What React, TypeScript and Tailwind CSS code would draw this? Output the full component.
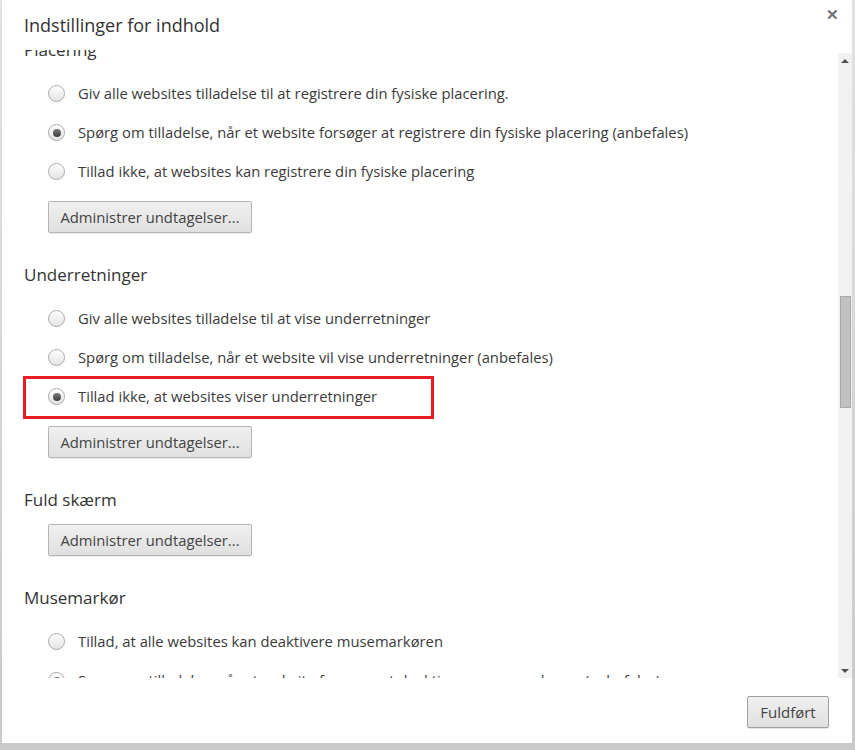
import React from 'react';

type Option = { label: string; checked?: boolean; marked?: boolean };

const Radio: React.FC<{ checked?: boolean }> = ({ checked }) => (
  <span className="relative flex h-[17px] w-[17px] shrink-0 items-center justify-center rounded-full border border-[#a9a9a9] bg-gradient-to-b from-[#fdfdfd] to-[#e4e4e4] shadow-[inset_0_1px_0_#fff]">
    {checked && (
      <span className="h-[8px] w-[8px] rounded-full bg-gradient-to-b from-[#7a7a7a] to-[#3c3c3c]" />
    )}
  </span>
);

const OptionRow: React.FC<Option> = ({ label, checked, marked }) => (
  <div className="relative flex h-[39px] items-center gap-[13px]">
    <Radio checked={checked} />
    <span>{label}</span>
    {marked && (
      <div className="pointer-events-none absolute -left-[25px] top-[-1px] h-[43px] w-[411px] border-[3px] border-[#e81d25]" />
    )}
  </div>
);

const ExceptionsButton = () => (
  <button className="h-[32px] w-[204px] rounded-[2px] border border-[#b4b4b4] bg-gradient-to-b from-[#f0f0f0] to-[#e0e0e0] text-[#444] shadow-[0_1px_0_rgba(0,0,0,0.08)]">
    Administrer undtagelser...
  </button>
);

const Section: React.FC<{ title: string; options?: Option[]; button?: boolean; last?: boolean }> = ({
  title,
  options,
  button = true,
  last,
}) => (
  <section className={last ? '' : 'mb-[30px]'}>
    <h3 className="h-[24px] text-[17px] leading-[24px] text-[#333]">{title}</h3>
    <div className="mt-[12px] pl-[24px]">
      {options && (
        <div className={button ? 'mb-[10px]' : ''}>
          {options.map((o) => (
            <OptionRow key={o.label} {...o} />
          ))}
        </div>
      )}
      {button && <ExceptionsButton />}
    </div>
  </section>
);

export default function App() {
  return (
    <div
      className="h-[750px] w-[855px] bg-gradient-to-b from-[#e2e2e2] to-[#c9c9c9] pl-[2px] pr-[3px] text-[14.8px] text-[#3a3a3a]"
      style={{ fontFamily: '"Open Sans", "Noto Sans", sans-serif' }}
    >
      <div className="flex h-[743px] flex-col bg-white">
        {/* title bar */}
        <div className="relative flex h-[50px] shrink-0 items-start pl-[22px] pt-[11px]">
          <h2 className="text-[18px] leading-[28px] text-[#333]">Indstillinger for indhold</h2>
          <span className="absolute right-[13px] top-[3px] text-[15px] font-bold text-[#6f6f6f]">✕</span>
        </div>

        {/* scrolling content */}
        <div className="flex h-[628px] shrink-0">
          <div className="flex-1 overflow-hidden">
            <div className="-mt-[12px] pl-[22px]">
              <Section
                title="Placering"
                options={[
                  { label: 'Giv alle websites tilladelse til at registrere din fysiske placering.' },
                  {
                    label: 'Spørg om tilladelse, når et website forsøger at registrere din fysiske placering (anbefales)',
                    checked: true,
                  },
                  { label: 'Tillad ikke, at websites kan registrere din fysiske placering' },
                ]}
              />
              <Section
                title="Underretninger"
                options={[
                  { label: 'Giv alle websites tilladelse til at vise underretninger' },
                  { label: 'Spørg om tilladelse, når et website vil vise underretninger (anbefales)' },
                  { label: 'Tillad ikke, at websites viser underretninger', checked: true, marked: true },
                ]}
              />
              <Section title="Fuld skærm" />
              <Section
                title="Musemarkør"
                last
                options={[
                  { label: 'Tillad, at alle websites kan deaktivere musemarkøren' },
                  {
                    label: 'Spørg om tilladelse, når et website forsøger at deaktivere musemarkøren (anbefales)',
                    checked: true,
                  },
                  { label: 'Tillad ikke, at websites kan deaktivere musemarkøren' },
                ]}
              />
            </div>
          </div>

          {/* scrollbar */}
          <div className="mt-[3px] flex w-[14px] shrink-0 flex-col items-center bg-[#f1f1f1]">
            <div className="flex h-[15px] w-full items-center justify-center">
              <span className="h-0 w-0 border-x-[4px] border-b-[4px] border-x-transparent border-b-[#505050]" />
            </div>
            <div className="mt-[228px] h-[112px] w-[11px] border border-[#a8a8a8] bg-[#c1c1c1]" />
            <div className="flex-1" />
            <div className="flex h-[15px] w-full items-center justify-center">
              <span className="h-0 w-0 border-x-[4px] border-t-[4px] border-x-transparent border-t-[#505050]" />
            </div>
          </div>
        </div>

        {/* footer */}
        <div className="flex flex-1 items-start justify-end pr-[23px] pt-[18px]">
          <button className="h-[32px] w-[82px] rounded-[2px] border border-[#a0a0a0] bg-gradient-to-b from-[#f0f0f0] to-[#e0e0e0] text-[15px] text-[#444] shadow-[0_1px_0_rgba(0,0,0,0.1)]">
            Fuldført
          </button>
        </div>
      </div>
    </div>
  );
}
